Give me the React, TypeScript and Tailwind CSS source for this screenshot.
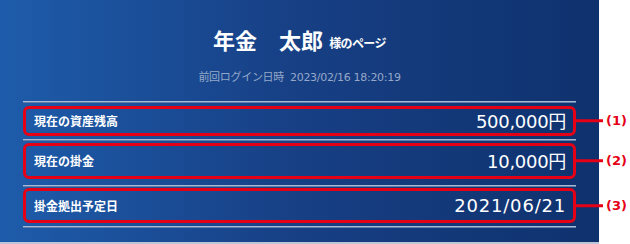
const font = { fontFamily: '"DejaVu Sans", "Noto Sans CJK JP", sans-serif' }
const jp = { fontFamily: '"Noto Sans CJK JP", sans-serif' }

const rows = [
  { label: '現在の資産残高', value: '500,000円', no: '(1)', mt: 'mt-[3px]', h: 'h-[30px]', mb: 'mb-[3px]', track: 'tracking-[-0.3px]' },
  { label: '現在の掛金', value: '10,000円', no: '(2)', mt: 'mt-[2px]', h: 'h-[36px]', mb: 'mb-[6px]', track: 'tracking-[-0.3px]' },
  { label: '掛金拠出予定日', value: '2021/06/21', no: '(3)', mt: 'mt-[1px]', h: 'h-[35px]', mb: 'mb-[3px]', track: 'tracking-[0.8px]' },
]

function Line() {
  return <div className="h-[2px] border-t border-[#a9b9d3] bg-[#5f7daa]" />
}

export default function App() {
  return (
    <div className="flex w-[630px] h-[244px] bg-white" style={font}>
      <div className="w-[599px] h-[244px] flex flex-col bg-gradient-to-r from-[#1e5cab] via-[#173f84] to-[#0f326e] border-b-2 border-[#bcc6d6]">
        <div className="h-[101px] flex flex-col items-center pt-[28px]">
          <div className="flex items-end text-white">
            <span className="text-[22px] font-bold leading-none" style={jp}>
              年金　太郎
            </span>
            <span className="text-[12px] font-bold ml-[6px] mb-[1px] leading-none tracking-[-0.6px]" style={jp}>
              様のページ
            </span>
          </div>
          <div className="mt-[21px] text-[11px] text-[#95a8c9] leading-none tracking-[-0.3px]">
            <span style={jp}>前回ログイン日時</span>
            <span className="ml-[6px]">2023/02/16 18:20:19</span>
          </div>
        </div>
        <div className="mx-[23px]">
          {rows.map((r) => (
            <div key={r.no}>
              <Line />
              <div
                className={`${r.mt} ${r.h} ${r.mb} relative flex items-center justify-between border-[3px] border-[#e50016] rounded-[6px] pl-[8px] pr-[7px] text-white`}
              >
                <span className="text-[12px] font-bold" style={jp}>
                  {r.label}
                </span>
                <span className={`text-[18px] ${r.track}`}>{r.value}</span>
                <div className="absolute left-full top-1/2 -translate-y-1/2 flex items-center">
                  <div className="w-[30px] h-[3px] bg-[#e50016]" />
                  <span className="ml-[3px] text-[13px] font-bold text-[#e50016]">{r.no}</span>
                </div>
              </div>
            </div>
          ))}
          <Line />
        </div>
      </div>
    </div>
  )
}
